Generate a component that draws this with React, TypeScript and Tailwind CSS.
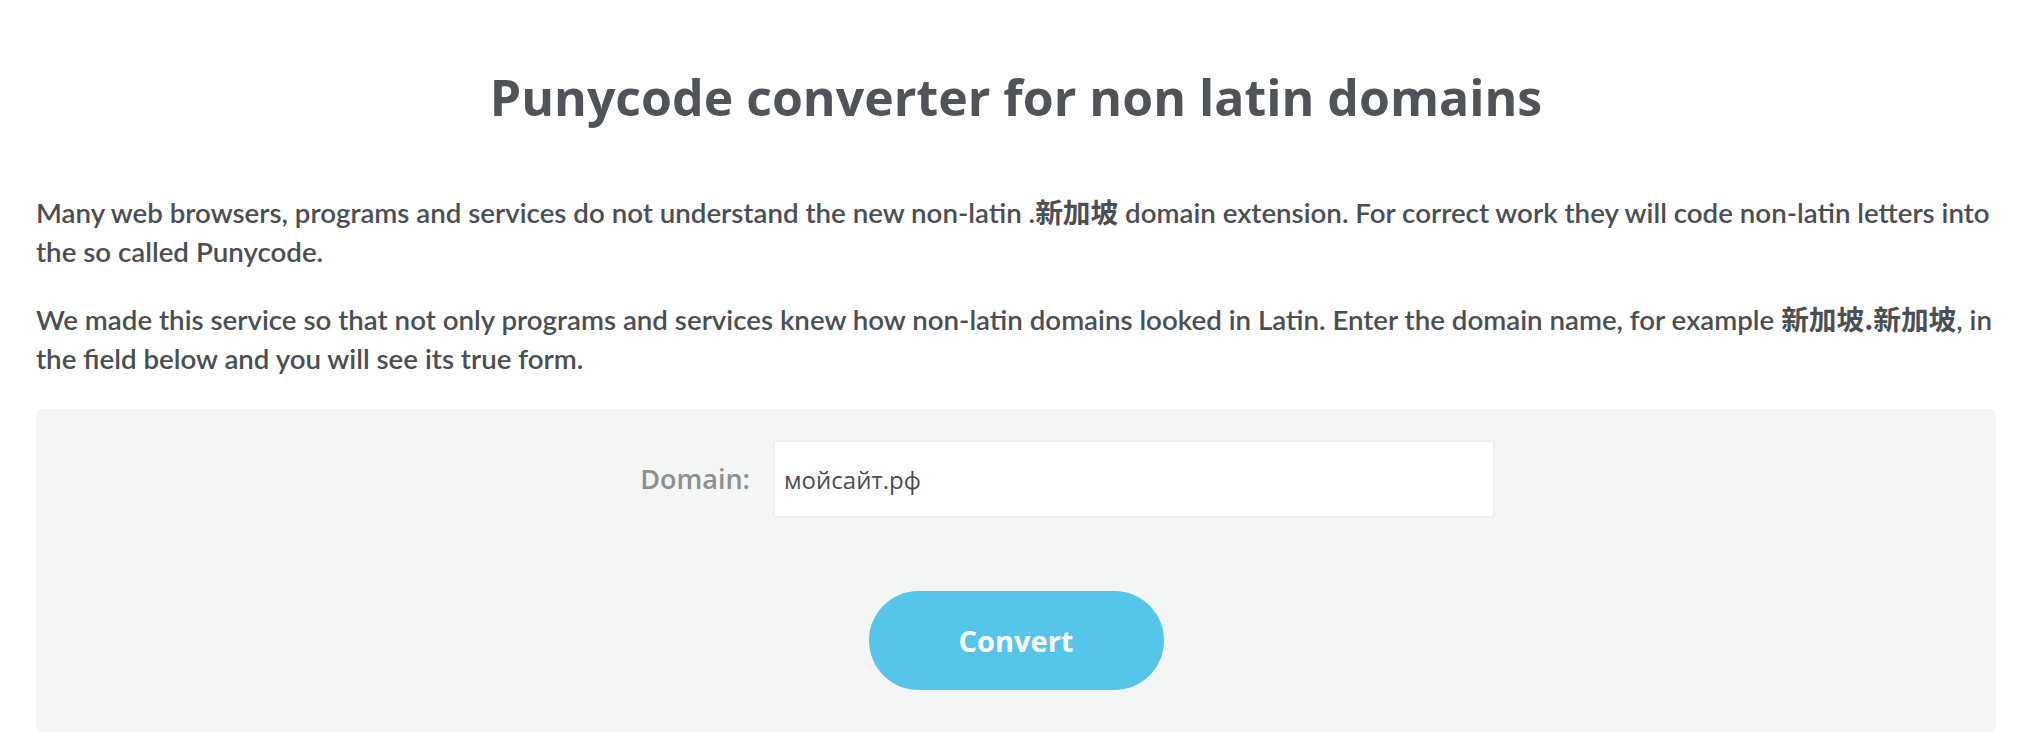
import { useState } from "react";

const cjk = "font-['Noto_Sans_CJK_SC',sans-serif] font-bold";

export default function App() {
  const [domain, setDomain] = useState("мойсайт.рф");

  return (
    <div className="min-h-screen bg-white pl-[36px] pr-[42px] font-['Lato',sans-serif] text-[#4b4e53]">
      <h1 className="pt-[71px] text-center font-['Open_Sans',sans-serif] text-[50px] font-bold leading-[53px] text-[#505358]">
        Punycode converter for non latin domains
      </h1>

      <div className="mt-[68px] text-[27.7px] font-semibold leading-[39px]">
        <p>
          Many web browsers, programs and services do not understand the new non-latin .
          <span className={cjk}>新加坡</span> domain extension. For correct work they will code
          non-latin letters into the so called Punycode.
        </p>
        <p className="mt-[28px]">
          We made this service so that not only programs and services knew how non-latin domains
          looked in Latin. Enter the domain name, for example{" "}
          <span className={cjk}>新加坡.新加坡</span>, in the field below and you will see its true
          form.
        </p>
      </div>

      <form
        className="mt-[31px] rounded-[6px] bg-[#f4f6f6] pt-[32px] pb-[42px] font-['Open_Sans',sans-serif]"
        onSubmit={(e) => e.preventDefault()}
      >
        <div className="flex items-center">
          <label
            htmlFor="domain"
            className="w-[738px] pr-[24px] text-right text-[27px] font-semibold text-[#8d8f91]"
          >
            Domain:
          </label>
          <input
            id="domain"
            value={domain}
            onChange={(e) => setDomain(e.target.value)}
            className="h-[76px] w-[720px] border border-[#ebeded] bg-white px-[9px] text-[24px] font-medium text-[#4b4e53] shadow-[0_0_3px_rgba(0,0,0,0.04)] outline-none"
          />
        </div>
        <div className="mt-[74px] flex justify-center">
          <button
            type="submit"
            className="h-[99px] w-[295px] rounded-full bg-[#55c6e9] text-[29px] font-bold text-white"
          >
            Convert
          </button>
        </div>
      </form>
    </div>
  );
}
